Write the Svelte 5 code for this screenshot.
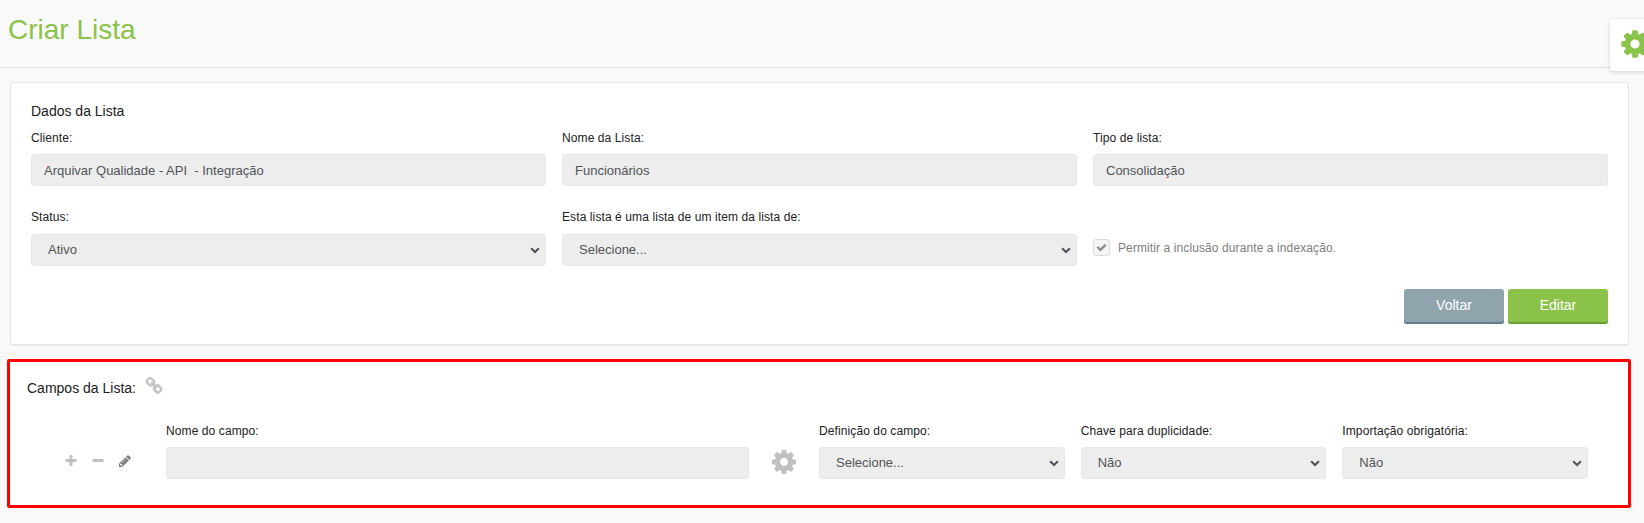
<script>
  const icons = {
    cog: 'M1152 896q0-106-75-181t-181-75-181 75-75 181 75 181 181 75 181-75 75-181zm512-109v222q0 12-8 23t-20 13l-185 28q-19 54-39 91 35 50 107 138 10 12 10 25t-9 23q-27 37-99 108t-94 71q-12 0-26-9l-138-108q-44 23-91 38-16 136-29 186-7 28-36 28h-222q-14 0-24.5-8.5t-11.5-21.5l-28-184q-49-16-90-37l-141 107q-10 9-25 9-14 0-25-11-126-114-165-168-7-10-7-23 0-12 8-23 15-21 51-66.5t54-70.5q-27-50-41-99l-183-27q-13-2-21-12.5t-8-23.5v-222q0-12 8-23t19-13l186-28q14-46 39-92-40-57-107-138-10-12-10-24 0-10 9-23 26-36 98.5-107.5t94.5-71.5q13 0 26 10l138 107q44-23 91-38 16-136 29-186 7-28 36-28h222q14 0 24.5 8.5t11.5 21.5l28 184q49 16 90 37l142-107q9-9 24-9 13 0 25 10 129 119 165 170 7 8 7 22 0 12-8 23-15 21-51 66.5t-54 70.5q26 50 41 98l183 28q13 2 21 12.5t8 23.5z',
    chain: 'M1520 1216q0-40-28-68l-208-208q-28-28-68-28-42 0-72 32 3 3 19 18.5t21.5 21.5 15 19 13 25.5 3.5 27.5q0 40-28 68t-68 28q-15 0-27.5-3.5t-25.5-13-19-15-21.5-21.5-18.5-19q-33 31-33 73 0 40 28 68l206 207q27 27 68 27 40 0 68-26l147-146q28-28 28-67zm-703-705q0-40-28-68l-206-207q-28-28-68-28-39 0-68 27l-147 146q-28 28-28 67 0 40 28 68l208 208q27 27 68 27 42 0 72-31-3-3-19-18.5t-21.5-21.5-15-19-13-25.5-3.5-27.5q0-40 28-68t68-28q15 0 27.5 3.5t25.5 13 19 15 21.5 21.5 18.5 19q33-31 33-73zm895 705q0 120-85 203l-147 146q-83 83-203 83-121 0-204-85l-206-207q-83-83-83-203 0-123 88-209l-88-88q-86 88-208 88-120 0-204-84l-208-208q-84-84-84-204t85-203l147-146q83-83 203-83 121 0 204 85l206 207q83 83 83 203 0 123-88 209l88 88q86-88 208-88 120 0 204 84l208 208q84 84 84 204z',
    pencil: 'M491 1536l91-91-235-235-91 91v107h128v128h107zm523-928q0-22-22-22-10 0-17 7l-542 542q-7 7-7 17 0 22 22 22 10 0 17-7l542-542q7-7 7-17zm-54-192l416 416-832 832h-416v-416zm683 96q0 53-37 90l-166 166-416-416 166-165q36-38 90-38 53 0 91 38l235 234q37 39 37 91z',
    plus: 'M1600 736v192q0 40-28 68t-68 28h-416v416q0 40-28 68t-68 28h-192q-40 0-68-28t-28-68v-416h-416q-40 0-68-28t-28-68v-192q0-40 28-68t68-28h416v-416q0-40 28-68t68-28h192q40 0 68 28t28 68v416h416q40 0 68 28t28 68z',
    minus: 'M1600 736v192q0 40-28 68t-68 28h-1216q-40 0-68-28t-28-68v-192q0-40 28-68t68-28h1216q40 0 68 28t28 68z',
    check: 'M1671 566q0 40-28 68l-724 724-136 136q-28 28-68 28t-68-28l-136-136-362-362q-28-28-28-68t28-68l136-136q28-28 68-28t68 28l294 295 656-657q28-28 68-28t68 28l136 136q28 28 28 68z'
  };

  const fieldSelects = [
    { label: 'Definição do campo:', value: 'Selecione...' },
    { label: 'Chave para duplicidade:', value: 'Não' },
    { label: 'Importação obrigatória:', value: 'Não' }
  ];
</script>

{#snippet icon(name, size)}
  <svg class="icon" width={size} height={size} viewBox="0 0 1792 1792" aria-hidden="true"><path d={icons[name]} fill="currentColor" /></svg>
{/snippet}

{#snippet input(label, value)}
  <div class="field">
    <span class="label">{label}</span>
    <div class="control">{value}</div>
  </div>
{/snippet}

{#snippet select(label, value)}
  <div class="field">
    <span class="label">{label}</span>
    <div class="control select">
      <span>{value}</span>
      <svg width="10" height="7" viewBox="0 0 10 7" aria-hidden="true"><path d="M1.1 1.2 5 5 8.9 1.2" fill="none" stroke="currentColor" stroke-width="2.1" /></svg>
    </div>
  </div>
{/snippet}

<div class="page">
  <header><h1>Criar Lista</h1></header>
  <div class="settings">{@render icon('cog', 32)}</div>

  <main>
    <section class="card">
      <h2>Dados da Lista</h2>
      <div class="grid">
        {@render input('Cliente:', 'Arquivar Qualidade - API  - Integração')}
        {@render input('Nome da Lista:', 'Funcionários')}
        {@render input('Tipo de lista:', 'Consolidação')}
        {@render select('Status:', 'Ativo')}
        {@render select('Esta lista é uma lista de um item da lista de:', 'Selecione...')}
        <div class="check">
          <span class="box">{@render icon('check', 11)}</span>
          <span class="check-text">Permitir a inclusão durante a indexação.</span>
        </div>
      </div>
      <div class="buttons">
        <button class="back">Voltar</button>
        <button class="edit">Editar</button>
      </div>
    </section>

    <section class="fields">
      <div class="fields-title">
        <h2>Campos da Lista:</h2>
        <span class="link">{@render icon('chain', 18)}</span>
      </div>
      <div class="row">
        <div class="actions">
          {@render icon('plus', 14)}
          {@render icon('minus', 14)}
          <span class="pencil">{@render icon('pencil', 14)}</span>
        </div>
        {@render input('Nome do campo:', '')}
        <div class="gear">{@render icon('cog', 28)}</div>
        {#each fieldSelects as f}
          {@render select(f.label, f.value)}
        {/each}
      </div>
    </section>
  </main>
</div>

<style>
  :global(body) {
    background: #f9f9f9;
    overflow: hidden;
  }
  .page {
    position: relative;
    box-sizing: border-box;
    height: 523px;
    overflow: hidden;
    font-family: 'Liberation Sans', Arial, sans-serif;
    font-size: 13px;
    color: #212121;
  }
  .icon {
    display: block;
    flex: none;
  }
  header {
    box-sizing: border-box;
    height: 68px;
    padding: 14px 8px 0;
    border-bottom: 1px solid #dde0e2;
  }
  h1 {
    margin: 0;
    font-size: 28px;
    line-height: 32px;
    font-weight: 400;
    color: #8bc34a;
  }
  .settings {
    position: absolute;
    top: 19px;
    right: -16px;
    box-sizing: border-box;
    width: 50px;
    height: 52px;
    padding: 9px 0 0 9px;
    background: #fff;
    border-radius: 3px;
    box-shadow: 0 1px 4px rgba(0, 0, 0, 0.15);
    color: #8bc34a;
  }
  main {
    padding: 14px 13px 0 7px;
  }
  .card {
    box-sizing: border-box;
    height: 264px;
    margin: 0 2px 0 3px;
    padding: 20px 20px 0;
    background: #fff;
    border: 1px solid #e5e8eb;
    border-bottom-width: 2px;
    border-radius: 3px;
  }
  h2 {
    margin: 0;
    font-size: 14px;
    line-height: 16px;
    font-weight: 400;
  }
  .grid {
    display: grid;
    grid-template-columns: repeat(3, 1fr);
    column-gap: 16px;
    row-gap: 23px;
    padding-top: 11px;
  }
  .label {
    display: block;
    height: 24px;
    font-size: 12px;
    line-height: 16px;
    letter-spacing: 0.1px;
    white-space: nowrap;
  }
  .grid .field:nth-child(n + 4) .label {
    height: 25px;
  }
  .control {
    box-sizing: border-box;
    height: 32px;
    padding: 1px 12px 0;
    border: 1px solid #e5e9ed;
    border-radius: 3px;
    background: #ededed;
    color: #505459;
    line-height: 30px;
    white-space: pre;
  }
  .select {
    display: flex;
    align-items: center;
    justify-content: space-between;
    padding: 0 5px 0 16px;
  }
  .check {
    display: flex;
    align-items: center;
    gap: 8px;
    height: 18px;
    margin-top: 29px;
    color: #7d7d7d;
    font-size: 12px;
    letter-spacing: 0.1px;
  }
  .check-text {
    padding-top: 2px;
  }
  .box {
    box-sizing: border-box;
    display: flex;
    align-items: center;
    justify-content: center;
    width: 17px;
    height: 17px;
    border: 1px solid #dcdcdc;
    border-radius: 3px;
    background: #f4f4f4;
    color: #8b8b8b;
  }
  .buttons {
    display: flex;
    justify-content: flex-end;
    gap: 4px;
    padding-top: 23px;
  }
  button {
    width: 100px;
    height: 35px;
    padding: 0 0 3px;
    border: 0;
    border-radius: 3px;
    color: #fff;
    font: 14px/16px 'Liberation Sans', Arial, sans-serif;
  }
  .back {
    background: #90a4ae;
    box-shadow: inset 0 -2px #607d8b;
  }
  .edit {
    background: #8bc34a;
    box-shadow: inset 0 -2px #689f38;
  }
  .fields {
    box-sizing: border-box;
    height: 149px;
    margin-top: 13px;
    padding: 15px 40px 0 17px;
    border: 3px solid #f00;
    border-radius: 2px;
    background: #fff;
  }
  .fields-title {
    display: flex;
    gap: 9px;
    height: 46px;
  }
  .fields-title h2 {
    padding-top: 3px;
  }
  .link {
    color: #c0c0c0;
  }
  .link :global(path) {
    stroke: currentColor;
    stroke-width: 50;
  }
  .row {
    display: grid;
    grid-template-columns: 123px 583px 38px repeat(3, 1fr);
    column-gap: 16px;
  }
  .actions {
    display: flex;
    gap: 13px;
    padding: 31px 0 0 37px;
    color: #c0c0c0;
  }
  .pencil {
    color: #808080;
  }
  .gear {
    padding: 25px 0 0 5px;
    color: #c0c0c0;
  }
</style>
